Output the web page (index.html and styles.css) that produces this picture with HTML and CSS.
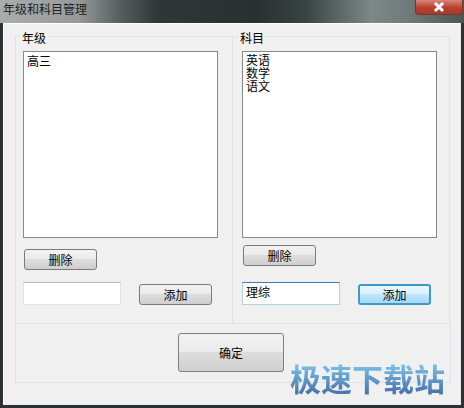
FILE: index.html
```html
<!doctype html>
<html lang="zh">
  <head>
    <meta charset="UTF-8">
    <title>年级和科目管理</title>
    <link rel="stylesheet" href="styles.css">
  </head>
  <body>
    <div class="window">
      <div class="titlebar">
        <span class="title">年级和科目管理</span>
        <span class="close">
          <svg width="14" height="12" viewBox="0 0 14 12"><path d="M3 2 L11 10 M11 2 L3 10" stroke="#fff" stroke-width="3"/></svg>
        </span>
      </div>
      <div class="client">
        <div class="groups">
          <section class="group group-left">
            <span class="legend">年级</span>
            <div class="list">高三</div>
            <button class="btn btn-delete">删除</button>
            <div class="add-row">
              <div class="input"></div>
              <button class="btn">添加</button>
            </div>
          </section>
          <section class="group group-right">
            <span class="legend">科目</span>
            <div class="list">英语<br>数学<br>语文</div>
            <button class="btn btn-delete">删除</button>
            <div class="add-row">
              <div class="input input-focus">理综</div>
              <button class="btn btn-focus">添加</button>
            </div>
          </section>
        </div>
        <div class="footer">
          <button class="btn btn-ok">确定</button>
        </div>
      </div>
      <div class="watermark">极速下载站</div>
    </div>
  </body>
</html>
```

FILE: styles.css
```css
* {
  box-sizing: border-box;
}

html,
body {
  margin: 0;
  height: 100%;
}

body {
  font-family: "Noto Sans CJK SC", "Liberation Sans", sans-serif;
  font-size: 12px;
  color: #000;
}

.window {
  position: relative;
  width: 464px;
  height: 408px;
  display: flex;
  flex-direction: column;
  background: #2b3233;
}

.titlebar {
  height: 23px;
  flex: none;
  display: flex;
  justify-content: space-between;
  background: linear-gradient(90deg, #a9adac 0, #969a99 17%, #555d5d 26%, #2f3738 34%, #283031 55%, #3a4445 66%, #7c8887 80%, #6f7b7a 88%, #4c5554 100%);
}

.title {
  padding: 0 0 0 3px;
  line-height: 17px;
  color: #1c1f1f;
}

.close {
  width: 48px;
  height: 15px;
  margin-right: 1px;
  display: flex;
  align-items: center;
  justify-content: center;
  border: 1px solid #6b3a34;
  border-top: 0;
  border-radius: 0 0 4px 4px;
  background: linear-gradient(#d8867a, #b8402c 55%, #a83a28);
}

.client {
  flex: 1;
  margin: 0 3px 3px;
  padding: 12px 10px 0 11px;
  background: #f0f0f0;
  border: 1px solid #fff;
  border-right-color: #e8e8e8;
  border-bottom-color: #e8e8e8;
}

.groups {
  display: flex;
  height: 287px;
}

.group {
  position: relative;
  width: 217px;
  padding: 14px 0 0 7px;
  border: 1px solid #e0e3e3;
  border-bottom: 0;
}

.group-left {
  border-right: 0;
}

.group-right {
  width: 218px;
  padding-left: 9px;
}

.legend {
  position: absolute;
  top: -7px;
  left: 4px;
  padding: 0 2px;
  line-height: 16px;
  background: #f0f0f0;
}

.group-right .legend {
  left: 5px;
}

.list {
  width: 195px;
  height: 187px;
  padding: 1px 3px;
  line-height: 13px;
  background: #fff;
  border: 1px solid #85888c;
  overflow: hidden;
}

.group-left .list {
  line-height: 16px;
}

.btn {
  display: block;
  width: 73px;
  height: 21px;
  padding: 0;
  font: inherit;
  color: #000;
  border: 1px solid #7b7b7b;
  border-radius: 3px;
  background: linear-gradient(#f2f2f2 0, #ebebeb 48%, #dddddd 50%, #cfcfcf 100%);
}

.btn-delete {
  margin: 11px 0 0 1px;
}

.group-right .btn-delete {
  margin-top: 7px;
}

.add-row {
  display: flex;
  align-items: flex-end;
  gap: 18px;
  margin-top: 12px;
}

.group-right .add-row {
  margin-top: 16px;
}

.input {
  width: 98px;
  height: 23px;
  padding: 0 3px;
  line-height: 18px;
  background: #fff;
  border: 1px solid #e0e3e5;
  border-top-color: #b5b8bb;
}

.input-focus {
  border-color: #b4d2e6;
  border-top-color: #3d7bad;
}

.btn-focus {
  border: 2px solid #3c9ac9;
  background: linear-gradient(#eaf6fd 0, #d9f0fc 48%, #bee6fd 50%, #a7d9f5 100%);
}

.footer {
  display: flex;
  justify-content: center;
  width: 436px;
  height: 60px;
  padding: 9px 4px 0 0;
  border: 1px solid #e0e3e3;
}

.btn-ok {
  width: 106px;
  height: 39px;
  border-color: #808080;
}

.watermark {
  position: absolute;
  left: 290px;
  top: 358px;
  font-size: 31px;
  line-height: 40px;
  font-weight: 700;
  color: transparent;
  background: linear-gradient(#78bde3 20%, #4a76ae 85%);
  -webkit-background-clip: text;
  background-clip: text;
}
```
